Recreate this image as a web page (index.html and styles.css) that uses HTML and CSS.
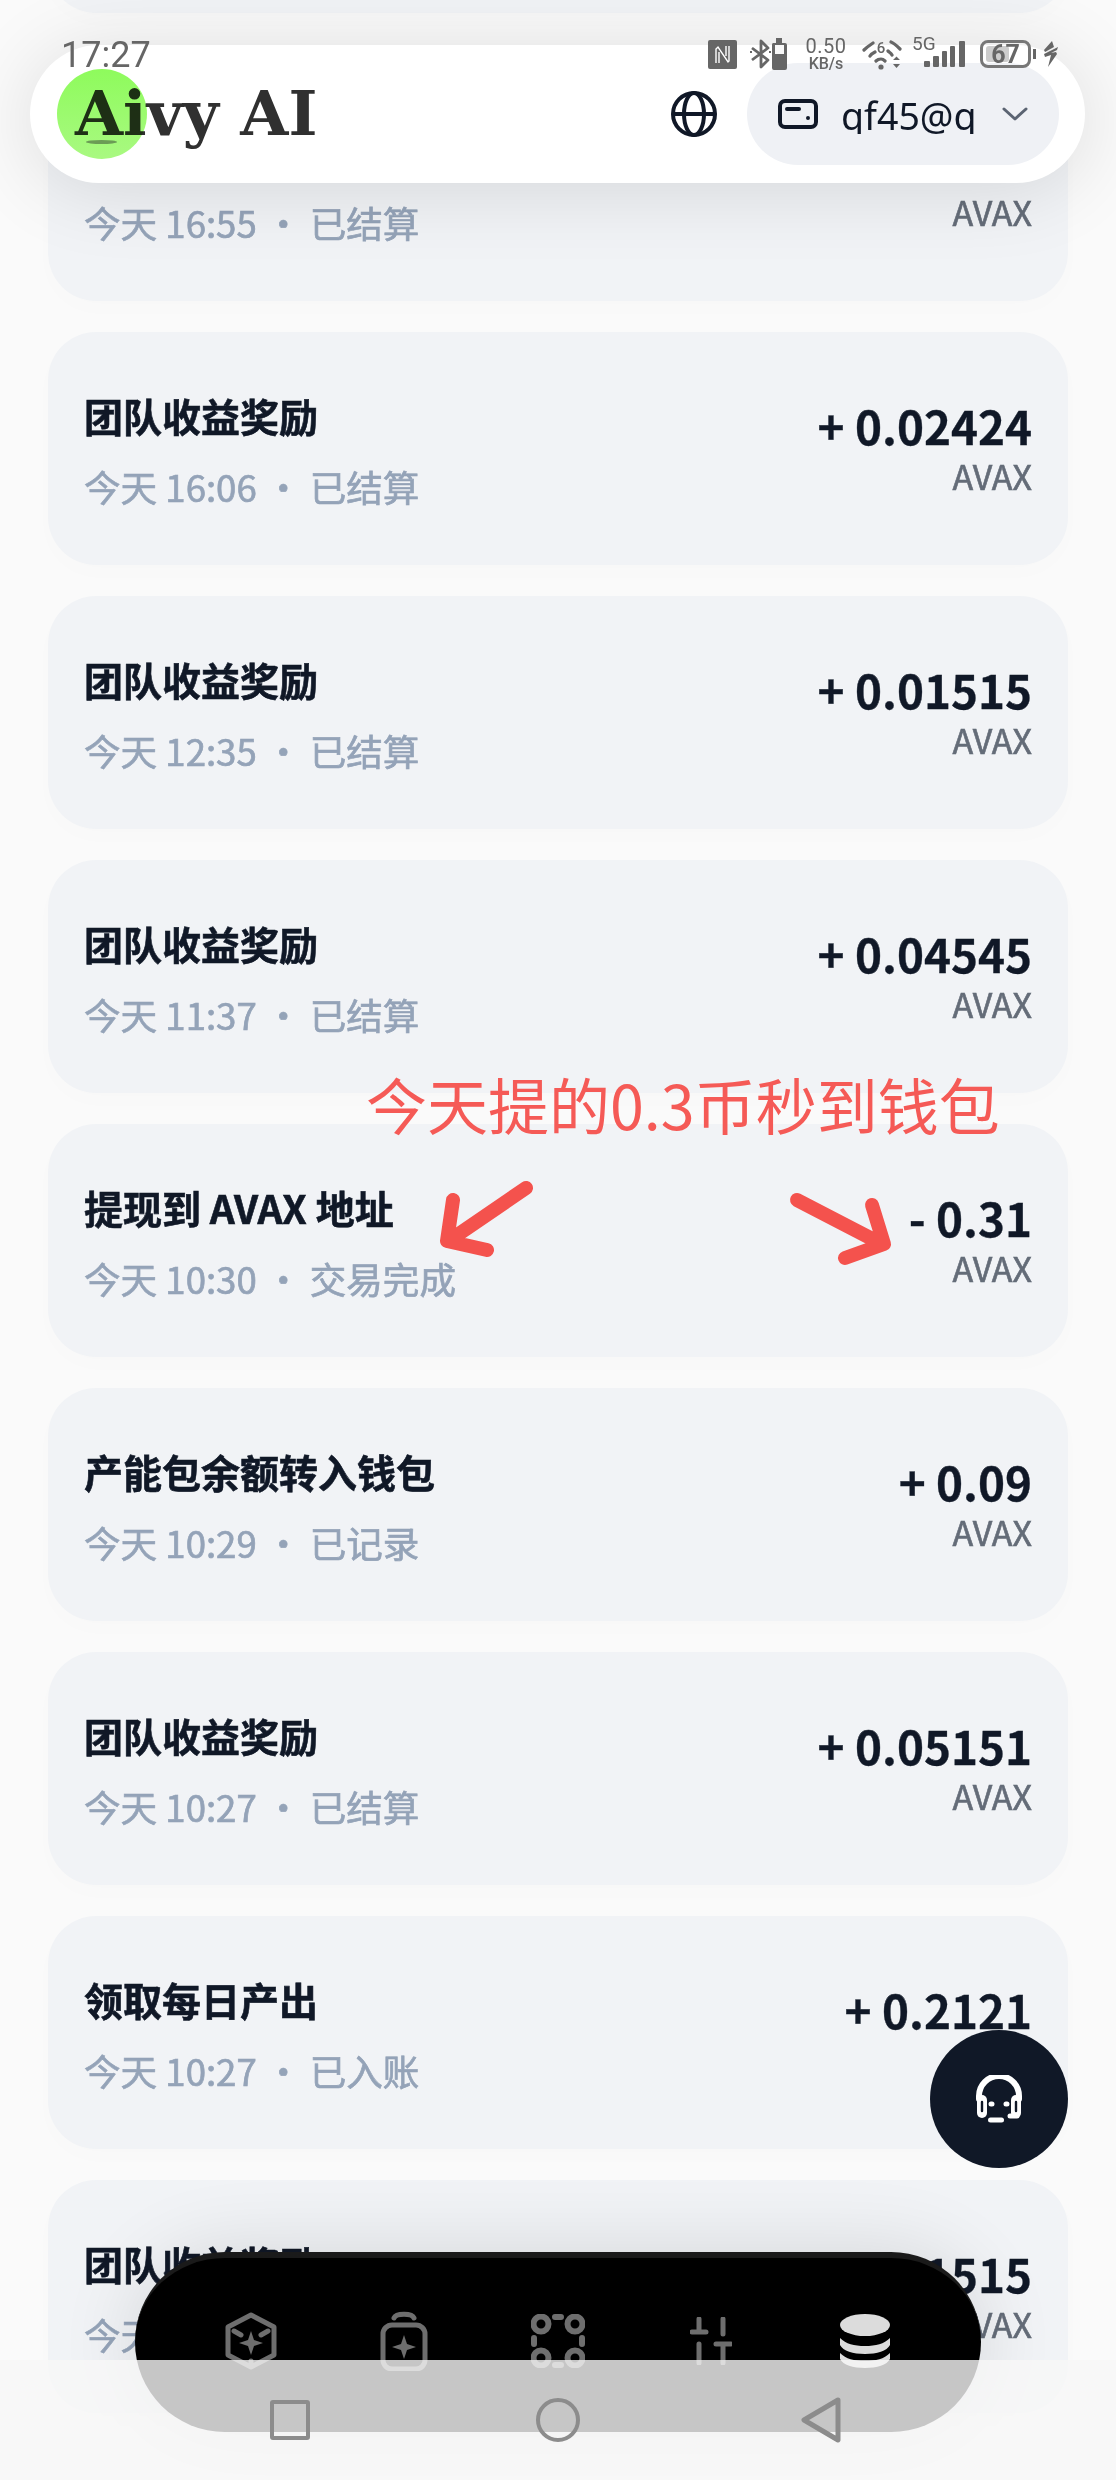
FILE: index.html
```html
<!DOCTYPE html>
<html lang="zh-CN">
<head>
    <meta charset="UTF-8">
    <meta name="viewport" content="width=device-width, initial-scale=1.0">
    <title>Aivy AI</title>
    <link rel="stylesheet" href="styles.css">
</head>
<body>
    <div class="page">
        <div class="list">
            <div class="card card-stub"></div>
            <div class="card">
                <div><p class="title"></p><p class="sub">今天 16:55 · 已结算</p></div>
                <div class="money"><p class="amount"></p><p class="coin">AVAX</p></div>
            </div>
            <div class="card">
                <div><p class="title">团队收益奖励</p><p class="sub">今天 16:06 · 已结算</p></div>
                <div class="money"><p class="amount">+ 0.02424</p><p class="coin">AVAX</p></div>
            </div>
            <div class="card">
                <div><p class="title">团队收益奖励</p><p class="sub">今天 12:35 · 已结算</p></div>
                <div class="money"><p class="amount">+ 0.01515</p><p class="coin">AVAX</p></div>
            </div>
            <div class="card">
                <div><p class="title">团队收益奖励</p><p class="sub">今天 11:37 · 已结算</p></div>
                <div class="money"><p class="amount">+ 0.04545</p><p class="coin">AVAX</p></div>
            </div>
            <div class="card">
                <div><p class="title">提现到 AVAX 地址</p><p class="sub">今天 10:30 · 交易完成</p></div>
                <div class="money"><p class="amount">- 0.31</p><p class="coin">AVAX</p></div>
            </div>
            <div class="card">
                <div><p class="title">产能包余额转入钱包</p><p class="sub">今天 10:29 · 已记录</p></div>
                <div class="money"><p class="amount">+ 0.09</p><p class="coin">AVAX</p></div>
            </div>
            <div class="card">
                <div><p class="title">团队收益奖励</p><p class="sub">今天 10:27 · 已结算</p></div>
                <div class="money"><p class="amount">+ 0.05151</p><p class="coin">AVAX</p></div>
            </div>
            <div class="card">
                <div><p class="title">领取每日产出</p><p class="sub">今天 10:27 · 已入账</p></div>
                <div class="money"><p class="amount">+ 0.2121</p><p class="coin">AVAX</p></div>
            </div>
            <div class="card">
                <div><p class="title">团队收益奖励</p><p class="sub">今天 10:26 · 已结算</p></div>
                <div class="money"><p class="amount">+ 0.01515</p><p class="coin">AVAX</p></div>
            </div>
        </div>

        <header class="topbar">
            <div class="brand">
                <div class="logo"><span class="logo-shadow"></span></div>
                <span class="brand-name">Aivy AI</span>
            </div>
            <svg class="globe" viewBox="0 0 46 46" fill="none" stroke="#101827" stroke-width="4">
                <circle cx="23" cy="23" r="21"/>
                <ellipse cx="23" cy="23" rx="10" ry="21"/>
                <path d="M2 23h42"/>
            </svg>
            <div class="wallet">
                <svg class="wallet-icon" viewBox="0 0 40 30" fill="none" stroke="#101827" stroke-width="4">
                    <rect x="2" y="2" width="36" height="26" rx="5"/>
                    <path d="M9 10h12" stroke-linecap="round"/>
                    <circle cx="30" cy="19" r="1" stroke-width="2" fill="#101827"/>
                </svg>
                <div class="wallet-name">qf45@qq.com</div>
                <svg class="chevron" viewBox="0 0 26 14" fill="none" stroke="#5b6472" stroke-width="3" stroke-linecap="round" stroke-linejoin="round">
                    <path d="M2 2l11 10L24 2"/>
                </svg>
            </div>
        </header>

        <div class="statusbar">
            <span class="clock">17:27</span>
            <div class="status-icons">
                <svg width="29" height="29" viewBox="0 0 29 29">
                    <rect width="29" height="29" rx="2" fill="#666"/>
                    <path d="M8 23V9l2-2 10 15 1-1V6M11 23V12M18 6v10" fill="none" stroke="#fff" stroke-width="1.4"/>
                </svg>
                <svg class="gap-s" width="38" height="32" viewBox="0 0 38 32" fill="none">
                    <path d="M2 10l16 12-7 7V3l7 7L2 22" stroke="#666" stroke-width="2.8" stroke-linejoin="round"/>
                    <path d="M1 13v5M20 13v5" stroke="#666" stroke-width="2" stroke-dasharray="2 3"/>
                    <path d="M23 5h3V0h6v5h3a2 2 0 0 1 2 2v23a2 2 0 0 1-2 2H24a2 2 0 0 1-2-2V7a2 2 0 0 1 1-2z" fill="#666"/>
                    <rect x="25" y="7" width="9" height="9" fill="#f8f8f8"/>
                </svg>
                <div class="speed"><span>0.50</span><small>KB/s</small></div>
                <svg class="gap-m" width="40" height="32" viewBox="0 0 40 32" fill="none" stroke="#666" stroke-width="3.2" stroke-linecap="round">
                    <path d="M2 12c3-3 6-5 9-7M29 4c3 1 6 4 9 7M8 18c1-2 3-3 5-4M26 13c1 1 3 2 4 4M14 23c1-1 3-2 5-2s3 1 4 2"/>
                    <circle cx="19" cy="29" r="2.6" fill="#666" stroke="none"/>
                    <path d="M31 22l3.500-3.500 3.500 3.500zM31 26l3.500 4 3.500-4z" fill="#666" stroke="none"/>
                    <text class="wifi-six" x="19" y="15" text-anchor="middle" fill="#666" stroke="none">6</text>
                </svg>
                <div class="signal">
                    <span class="net">5G</span>
                    <svg width="41" height="26" viewBox="0 0 41 26" fill="#666">
                        <rect y="20" width="6" height="6" rx="1"/>
                        <rect x="9" y="15" width="6" height="11" rx="1"/>
                        <rect x="18" y="10" width="5" height="16" rx="1"/>
                        <rect x="26" y="5" width="5" height="21" rx="1"/>
                        <rect x="35" y="0" width="6" height="26" rx="1"/>
                    </svg>
                </div>
                <div class="battery"><span class="battery-fill"></span><span class="battery-num">67</span></div>
                <span class="battery-tip"></span>
                <svg class="gap-xs" width="15" height="26" viewBox="0 0 15 26" fill="#666">
                    <path d="M9 0L1 9l1 2 9-5zM15 6L1 13l1 3 6-2-3 12 9-13-1-2-5 1 6-3z"/>
                </svg>
            </div>
        </div>

        <p class="note">今天提的0.3币秒到钱包</p>
        <svg class="note-arrows" width="1116" height="120" viewBox="0 0 1116 120" fill="none" stroke="#f4524d" stroke-width="14" stroke-linecap="round" stroke-linejoin="round">
            <path d="M526 33L450 85M453 45L447 86L487 95"/>
            <path d="M797 45L880 88M872 50L884 89L845 103"/>
        </svg>

        <button class="help">
            <svg width="48" height="49" viewBox="0 0 48 49" fill="none" stroke="#fff" stroke-linecap="round">
                <path d="M4 24v-3a20 20 0 0 1 40 0v3" stroke-width="6"/>
                <rect x="2" y="20" width="10" height="23" rx="5" fill="#fff" stroke="none"/>
                <rect x="36" y="20" width="10" height="23" rx="5" fill="#fff" stroke="none"/>
                <path d="M7 27v9M41 27v9" stroke="#101827" stroke-width="2.400"/>
                <path d="M16 29h1M32 29h-1" stroke-width="5"/>
                <path d="M15.500 45h11" stroke-width="5"/>
                <path d="M35 41h7" stroke-width="5"/>
            </svg>
        </button>

        <nav class="tabbar">
            <svg class="tab" width="54" height="58" viewBox="0 0 54 58" fill="none" stroke="#6e6e6e" stroke-width="5" stroke-linecap="round" stroke-linejoin="round">
                <path d="M27 3l23 12v28L27 55 4 43V15z"/>
                <path d="M10 19l7 4M44 19l-7 4M27 49v5"/>
                <path d="M27 19l3 9 9 3-9 3-3 9-3-9-9-3 9-3z" fill="#6e6e6e" stroke="none"/>
            </svg>
            <svg class="tab" width="48" height="60" viewBox="0 0 48 60" fill="none" stroke="#6e6e6e" stroke-width="5" stroke-linecap="round" stroke-linejoin="round">
                <rect x="3" y="14" width="42" height="44" rx="9"/>
                <path d="M14 7c2-5 18-5 20 0"/>
                <path d="M24 24l3 9 9 3-9 3-3 9-3-9-9-3 9-3z" fill="#6e6e6e" stroke="none"/>
            </svg>
            <svg class="tab" width="54" height="54" viewBox="0 0 54 54" fill="none" stroke="#6e6e6e" stroke-width="6" stroke-linecap="round">
                <circle cx="10" cy="10" r="7.500"/>
                <circle cx="44" cy="10" r="7.500"/>
                <circle cx="10" cy="44" r="7.500"/>
                <circle cx="44" cy="44" r="7.500"/>
                <path d="M24 3h6M24 51h6M3 24v6M51 24v6"/>
            </svg>
            <svg class="tab" width="42" height="48" viewBox="0 0 42 48" fill="none" stroke="#6e6e6e" stroke-width="5" stroke-linecap="round">
                <path d="M9 2v13M2 15h14M9 27v19M33 2v15M26 27h15M33 27v19"/>
            </svg>
            <svg class="tab" width="50" height="54" viewBox="0 0 50 54" fill="#dcdcdc">
                <ellipse cx="25" cy="11" rx="25" ry="11"/>
                <path d="M0 24c6 6 14 8 25 8s19-2 25-8v7c-3 6-13 9-25 9S3 37 0 31z"/>
                <path d="M0 39c6 6 14 8 25 8s19-2 25-8v6c-3 6-13 9-25 9S3 51 0 45z"/>
            </svg>
        </nav>

        <div class="sysnav">
            <span class="sys-square"></span>
            <span class="sys-circle"></span>
            <svg width="40" height="46" viewBox="0 0 40 46" fill="none" stroke="#8c8c8c" stroke-width="5" stroke-linejoin="round">
                <path d="M37 3L3 23l34 20z"/>
            </svg>
        </div>
    </div>
</body>
</html>
```
FILE: styles.css
```css
* {
    box-sizing: border-box;
}
body {
    margin: 0;
    background: #fafafa;
    font-family: "Noto Sans CJK SC", "Noto Sans", sans-serif;
}
p {
    margin: 0;
}
.page {
    position: relative;
    width: 1116px;
    height: 2480px;
    overflow: hidden;
}

/* list */
.list {
    display: flex;
    flex-direction: column;
    gap: 31px;
    margin-top: -220px;
    padding: 0 48px;
}
.card {
    display: flex;
    justify-content: space-between;
    align-items: center;
    flex: none;
    height: 233px;
    padding: 4px 36px 0;
    background-color: #f1f3f6;
    border-radius: 48px;
    box-shadow: 0 8px 24px rgba(0, 0, 0, 0.012);
}
.card-stub {
    margin-bottom: 24px;
}
.title {
    height: 50px;
    margin-bottom: 22px;
    font-size: 39px;
    font-weight: 700;
    line-height: 50px;
    white-space: nowrap;
    color: #101827;
    -webkit-text-stroke: 0.6px #101827;
}
.sub {
    font-size: 36.600px;
    line-height: 50px;
    white-space: nowrap;
    color: #94a3b8;
    -webkit-text-stroke: 0.7px #94a3b8;
}
.money {
    text-align: right;
}
.amount {
    height: 50px;
    font-size: 45.800px;
    font-weight: 700;
    line-height: 50px;
    white-space: nowrap;
    color: #101827;
    -webkit-text-stroke: 0.3px #101827;
}
.coin {
    font-size: 34px;
    line-height: 52px;
    color: #646c78;
    -webkit-text-stroke: 0.6px #646c78;
}

/* top bar */
.topbar {
    position: absolute;
    top: 45px;
    left: 30px;
    display: flex;
    align-items: center;
    width: 1055px;
    height: 138px;
    padding: 0 26px 0 27px;
    background-color: #fff;
    border-radius: 69px;
    box-shadow: 0 6px 80px rgba(0, 0, 0, 0.12);
}
.brand {
    position: relative;
    display: flex;
    align-items: center;
    height: 90px;
    padding-left: 18px;
    flex: 1;
}
.logo {
    position: absolute;
    top: 0;
    left: 0;
    width: 90px;
    height: 90px;
    background: linear-gradient(to bottom, #8efb5c, #a9f981);
    border-radius: 50%;
}
.logo-shadow {
    position: absolute;
    top: 71px;
    left: 29px;
    width: 31px;
    height: 4px;
    background-color: #6b9c55;
    border-radius: 50%;
}
.brand-name {
    position: relative;
    font-family: "DejaVu Serif", serif;
    font-size: 62px;
    font-weight: 700;
    line-height: 88px;
    color: #303030;
    mix-blend-mode: multiply;
}
.globe {
    width: 46px;
    height: 46px;
    margin-right: 30px;
}
.wallet {
    display: flex;
    align-items: center;
    width: 312px;
    height: 102px;
    padding-left: 31px;
    background-color: #eff1f5;
    border-radius: 51px;
}
.wallet-icon {
    flex: none;
    width: 40px;
    height: 30px;
    margin-right: 23px;
}
.wallet-name {
    flex: none;
    width: 135px;
    height: 39px;
    overflow: hidden;
    font-family: "Noto Sans", sans-serif;
    font-size: 37.500px;
    line-height: 42px;
    white-space: nowrap;
    color: #101827;
}
.chevron {
    width: 26px;
    height: 14px;
    margin-left: 26px;
}

/* status bar */
.statusbar {
    position: absolute;
    top: 38px;
    left: 0;
    display: flex;
    justify-content: space-between;
    align-items: center;
    width: 100%;
    height: 32px;
    padding: 0 58px 0 61px;
    font-family: Roboto, sans-serif;
    color: #666;
}
.clock {
    padding-top: 2px;
    font-size: 36px;
    line-height: 32px;
}
.status-icons {
    display: flex;
    align-items: center;
}
.gap-s {
    margin-left: 13px;
}
.speed {
    display: flex;
    flex-direction: column;
    align-items: center;
    width: 42px;
    margin-left: 17px;
    padding-top: 2px;
    font-size: 20px;
    line-height: 18px;
    letter-spacing: 0.5px;
}
.speed small {
    font-size: 16px;
    font-weight: 500;
    letter-spacing: 0;
}
.gap-m {
    margin-left: 15px;
}
.wifi-six {
    font-size: 15px;
    font-weight: 500;
}
.signal {
    position: relative;
    height: 26px;
    margin-left: 22px;
}
.signal svg {
    display: block;
}
.net {
    position: absolute;
    top: -5px;
    left: -12px;
    font-size: 19px;
    line-height: 16px;
}
.battery {
    position: relative;
    display: flex;
    justify-content: center;
    align-items: center;
    width: 51px;
    height: 28px;
    margin-left: 15px;
    border: 3px solid #777;
    border-radius: 8px;
    font-size: 25px;
    font-weight: 700;
}
.battery-fill {
    position: absolute;
    top: 3px;
    bottom: 3px;
    left: 3px;
    width: 23px;
    background-color: #ccc;
    border-radius: 3px;
}
.battery-num {
    position: relative;
}
.battery-tip {
    width: 3px;
    height: 10px;
    margin-left: 2px;
    background-color: #666;
}
.gap-xs {
    margin-left: 7px;
}

/* annotation */
.note {
    position: absolute;
    top: 1062px;
    left: 366px;
    font-size: 61px;
    line-height: 84px;
    white-space: nowrap;
    color: #f55a56;
}
.note-arrows {
    position: absolute;
    top: 1155px;
    left: 0;
}

/* floating help button */
.help {
    position: absolute;
    top: 2030px;
    left: 930px;
    display: flex;
    justify-content: center;
    align-items: center;
    width: 138px;
    height: 138px;
    padding: 0;
    background-color: #101827;
    border: none;
    border-radius: 50%;
}

/* bottom nav */
.tabbar {
    position: absolute;
    top: 2252px;
    left: 135px;
    display: grid;
    grid-template-columns: repeat(5, 153.500px);
    justify-items: center;
    align-items: center;
    width: 846px;
    height: 180px;
    padding: 0 0 8px 39px;
    background-color: #000;
    border-top: 6px solid #1a1a1a;
    border-radius: 90px;
    box-shadow: 0 0 80px rgba(0, 0, 0, 0.12);
}
.sysnav {
    position: absolute;
    top: 2360px;
    left: 0;
    display: flex;
    justify-content: space-between;
    align-items: center;
    width: 100%;
    height: 120px;
    padding: 0 275px 0 270px;
    background-color: rgba(248, 248, 248, 0.8);
}
.sys-square {
    width: 40px;
    height: 40px;
    border: 4px solid #8c8c8c;
    border-radius: 3px;
}
.sys-circle {
    width: 44px;
    height: 44px;
    margin-left: 5px;
    border: 4px solid #8c8c8c;
    border-radius: 50%;
}
```
